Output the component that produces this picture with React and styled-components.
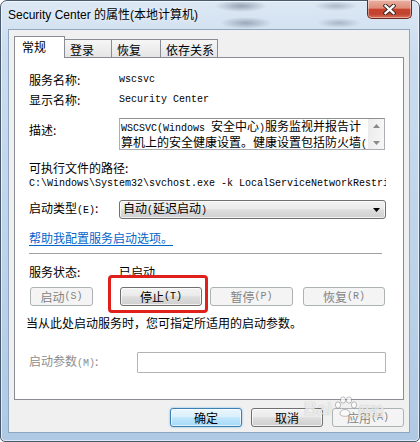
import styled, { createGlobalStyle } from "styled-components";

const GlobalStyle = createGlobalStyle`
  html, body {
    margin: 0;
    padding: 0;
    background: #fff;
  }
  body {
    width: 420px;
    height: 442px;
    overflow: hidden;
    font-family: "Noto Sans CJK SC", "Noto Sans", sans-serif;
    font-size: 12px;
  }
  * {
    box-sizing: border-box;
  }
`;

const Frame = styled.div`
  position: relative;
  width: 420px;
  height: 442px;
  display: flex;
  flex-direction: column;
  padding: 0 9px 8px 7px;
  border: 1px solid #4a5a6e;
  border-radius: 7px 7px 5px 5px;
  background:
    radial-gradient(ellipse 26px 6px at 240px 5px, rgba(70, 80, 100, 0.45), transparent),
    radial-gradient(ellipse 26px 6px at 245px 22px, rgba(70, 80, 100, 0.4), transparent),
    radial-gradient(ellipse 22px 5px at 335px 5px, rgba(70, 80, 100, 0.3), transparent),
    radial-gradient(ellipse 22px 5px at 338px 22px, rgba(70, 80, 100, 0.3), transparent),
    linear-gradient(180deg, #dce8f4 0%, #cbdcef 12%, #bcd3ea 60%, #afc9e5 100%);
  box-shadow: inset 0 0 0 1px rgba(255, 255, 255, 0.6);
`;

const TitleBar = styled.div`
  height: 28px;
  display: flex;
  align-items: flex-start;
  justify-content: space-between;
`;

const Title = styled.div`
  padding-top: 6px;
  font-family: "Liberation Sans", "Noto Sans CJK SC", sans-serif;
  font-size: 12px;
  line-height: 16px;
  color: #000;
  text-shadow: 0 0 6px rgba(255, 255, 255, 0.9);
`;

const CloseButton = styled.div`
  width: 45px;
  height: 19px;
  margin: -1px -2px 0 0;
  display: flex;
  align-items: center;
  justify-content: center;
  border: 1px solid #6d2720;
  border-top: none;
  border-radius: 0 0 5px 5px;
  background: linear-gradient(
    180deg,
    #eab0a2 0%,
    #df8d79 45%,
    #c8442e 52%,
    #c04331 78%,
    #d9735a 100%
  );
  box-shadow: inset 0 0 0 1px rgba(255, 255, 255, 0.4);
`;

const Client = styled.div`
  flex: 1;
  display: flex;
  flex-direction: column;
  background: #f0f0f0;
  border: 1px solid #8fa6c1;
  padding: 6px 5px 5px 5px;
`;

const TabStrip = styled.div`
  height: 21px;
  display: flex;
  align-items: flex-end;
`;

const Tab = styled.div`
  position: relative;
  z-index: ${(p) => (p.$active ? 1 : 0)};
  width: ${(p) => p.$w}px;
  height: ${(p) => (p.$active ? 22 : 18)}px;
  margin: 0 -1px ${(p) => (p.$active ? -1 : 0)}px 0;
  padding: 2px 0 0 ${(p) => (p.$active ? 7 : 5)}px;
  border: 1px solid #898c95;
  border-bottom: none;
  background: ${(p) =>
    p.$active ? "#fff" : "linear-gradient(180deg, #f6f6f6, #e5e5e5)"};
  line-height: 16px;
  color: #000;
`;

const Panel = styled.div`
  flex: 1;
  display: flex;
  flex-direction: column;
  background: #fff;
  border: 1px solid #898c95;
  padding: 12px 17px 0 14px;
`;

const Field = styled.div`
  display: flex;
  align-items: ${(p) => (p.$top ? "flex-start" : "center")};
  height: ${(p) => p.$h || 16}px;
  margin-top: ${(p) => p.$mt || 0}px;
`;

const Label = styled.div`
  flex: none;
  width: ${(p) => p.$w || 90}px;
  padding-top: ${(p) => p.$pt || 0}px;
  line-height: 16px;
  color: ${(p) => (p.$disabled ? "#8d8d8d" : "#000")};
  white-space: nowrap;
`;

const Mono = styled.div`
  font-family: "Liberation Mono", "DejaVu Sans Mono", monospace;
  font-size: 10px;
  line-height: 16px;
  color: #000;
  white-space: nowrap;
  overflow: hidden;
  width: ${(p) => (p.$w ? `${p.$w}px` : "auto")};
`;

const Half = styled.span`
  font-family: "Liberation Mono", "DejaVu Sans Mono", monospace;
  font-size: 10px;
`;

const Text = styled.div`
  line-height: 16px;
  color: #000;
  white-space: nowrap;
  margin-top: ${(p) => p.$mt || 0}px;
  margin-left: ${(p) => p.$ml || 0}px;
`;

const DescBox = styled.div`
  width: 266px;
  height: 32px;
  display: flex;
  border: 1px solid #abadb3;
  border-top-color: #8e8f8f;
  background: #fff;
`;

const DescText = styled.div`
  flex: 1;
  overflow: hidden;
  padding: 0 0 0 1px;
  line-height: 13px;
  white-space: nowrap;
  color: #000;
`;

const ScrollBar = styled.div`
  width: 16px;
  display: flex;
  flex-direction: column;
  align-items: center;
  justify-content: space-between;
  padding: 5px 0 4px;
  background: linear-gradient(90deg, #ececec, #f6f6f6);
`;

const Select = styled.div`
  width: 267px;
  height: 19px;
  display: flex;
  align-items: center;
  justify-content: space-between;
  padding: 0 5px 0 3px;
  border: 1px solid #707070;
  border-radius: 3px;
  background: linear-gradient(180deg, #f2f2f2 0%, #ebebeb 45%, #dddddd 52%, #cfcfcf 100%);
  box-shadow: inset 0 0 0 1px rgba(255, 255, 255, 0.7);
  line-height: 16px;
  color: #000;
`;

const HelpLink = styled.a`
  display: block;
  margin-top: 11px;
  line-height: 16px;
  color: #0066cc;
  text-decoration: underline;
  text-underline-offset: 2px;
  width: max-content;
`;

const Separator = styled.div`
  width: 353px;
  height: 1px;
  margin-top: 7px;
  background: #a0a0a0;
`;

const ButtonRow = styled.div`
  display: flex;
  height: 19px;
  margin-top: ${(p) => p.$mt || 0}px;
  justify-content: ${(p) => (p.$end ? "flex-end" : "flex-start")};
  gap: ${(p) => p.$gap || 0}px;
`;

const buttonBg = {
  normal:
    "linear-gradient(180deg, #f2f2f2 0%, #ebebeb 45%, #dddddd 52%, #cfcfcf 100%)",
  disabled: "#f4f4f4",
  default:
    "linear-gradient(180deg, #eaf6fd 0%, #d9f0fc 45%, #bee6fd 52%, #a7d9f5 100%)",
};

const buttonBorder = {
  normal: "#707070",
  disabled: "#adb2b5",
  default: "#3c7fb1",
};

const Button = styled.div`
  position: relative;
  flex: none;
  width: ${(p) => p.$w}px;
  height: 19px;
  margin-left: ${(p) => p.$ml || 0}px;
  display: flex;
  align-items: center;
  justify-content: center;
  border: 1px solid ${(p) => buttonBorder[p.$kind || "normal"]};
  border-radius: 3px;
  background: ${(p) => buttonBg[p.$kind || "normal"]};
  box-shadow: ${(p) =>
    p.$kind === "default"
      ? "inset 0 0 0 1px rgba(255,255,255,.6), 0 0 2px rgba(60,160,230,.8)"
      : p.$kind === "disabled"
      ? "none"
      : "inset 0 0 0 1px rgba(255,255,255,.7)"};
  color: ${(p) => (p.$kind === "disabled" ? "#838383" : "#000")};
  line-height: 16px;
  white-space: nowrap;
`;

const Highlight = styled.div`
  position: relative;
  margin-left: ${(p) => p.$ml || 0}px;
  display: flex;

  &::after {
    content: "";
    position: absolute;
    top: -12px;
    left: -12px;
    right: -6px;
    bottom: -7px;
    border: 3px solid #e0201b;
    border-radius: 4px;
    pointer-events: none;
  }
`;

const ParamInput = styled.div`
  width: 249px;
  height: 21px;
  border: 1px solid #b4b4b4;
  border-radius: 1px;
  background: #fff;
`;

const Watermark = styled.div`
  position: absolute;
  left: 303px;
  top: 395px;
  display: flex;
  align-items: flex-end;
  gap: 1px;
  pointer-events: none;
  font-family: "Liberation Sans", "Noto Sans CJK SC", sans-serif;
  color: rgba(255, 255, 255, 0.75);
  text-shadow: 0 0 1px rgba(0, 0, 0, 0.3);
`;

const WatermarkWord = styled.span`
  font-size: ${(p) => p.$size}px;
  font-weight: 700;
  line-height: 1;
`;

const Arrow = ({ dir }) => (
  <svg width="7" height="4" viewBox="0 0 7 4">
    <path
      d={dir === "up" ? "M0 4 L3.5 0 L7 4 Z" : "M0 0 L3.5 4 L7 0 Z"}
      fill={dir === "down-dark" ? "#000" : "#8a8a8a"}
    />
  </svg>
);

const CloseGlyph = () => (
  <svg width="13" height="11" viewBox="0 0 13 11">
    <path
      d="M2.5 1.8 L10.5 9.2 M10.5 1.8 L2.5 9.2"
      stroke="#3b2623"
      strokeWidth="4.2"
      strokeLinecap="square"
    />
    <path
      d="M2.5 1.8 L10.5 9.2 M10.5 1.8 L2.5 9.2"
      stroke="#fff"
      strokeWidth="2.3"
      strokeLinecap="square"
    />
  </svg>
);

const Paw = () => (
  <svg width="24" height="22" viewBox="0 0 24 22">
    <g fill="rgba(255,255,255,.7)" stroke="rgba(0,0,0,.25)" strokeWidth="1">
      <ellipse cx="5" cy="9" rx="2.6" ry="3.2" />
      <ellipse cx="10" cy="4" rx="2.6" ry="3.2" />
      <ellipse cx="16" cy="4" rx="2.6" ry="3.2" />
      <ellipse cx="21" cy="9" rx="2.6" ry="3.2" />
      <path d="M7 18 C7 12 17 12 17 18 C17 21 7 21 7 18 Z" />
    </g>
  </svg>
);

const tabs = [
  { name: "常规", w: 51, active: true },
  { name: "登录", w: 48 },
  { name: "恢复", w: 50 },
  { name: "依存关系", w: 58 },
];

export default function App() {
  return (
    <>
      <GlobalStyle />
      <Frame>
        <TitleBar>
          <Title>Security Center 的属性(本地计算机)</Title>
          <CloseButton>
            <CloseGlyph />
          </CloseButton>
        </TitleBar>
        <Client>
          <TabStrip>
            {tabs.map((t) => (
              <Tab key={t.name} $w={t.w} $active={t.active}>
                {t.name}
              </Tab>
            ))}
          </TabStrip>
          <Panel>
            <Field $h={20}>
              <Label>服务名称:</Label>
              <Mono>wscsvc</Mono>
            </Field>
            <Field $h={20}>
              <Label>显示名称:</Label>
              <Mono>Security Center</Mono>
            </Field>
            <Field $h={32} $mt={8} $top>
              <Label $pt={4}>描述:</Label>
              <DescBox>
                <DescText>
                  <div>
                    <Half>WSCSVC(Windows </Half>安全中心<Half>)</Half>
                    服务监视并报告计
                  </div>
                  <div>
                    算机上的安全健康设置。健康设置包括防火墙<Half>(</Half>
                  </div>
                </DescText>
                <ScrollBar>
                  <Arrow dir="up" />
                  <Arrow dir="down" />
                </ScrollBar>
              </DescBox>
            </Field>
            <Text $mt={10}>可执行文件的路径:</Text>
            <Mono $w={357}>
              C:\Windows\System32\svchost.exe -k LocalServiceNetworkRestricted
            </Mono>
            <Field $h={19} $mt={8}>
              <Label>
                启动类型<Half>(E)</Half>:
              </Label>
              <Select>
                <span>
                  自动<Half>(</Half>延迟启动<Half>)</Half>
                </span>
                <Arrow dir="down-dark" />
              </Select>
            </Field>
            <HelpLink href="#">帮助我配置服务启动选项。</HelpLink>
            <Separator />
            <Field $mt={10}>
              <Label>服务状态:</Label>
              <Text>已启动</Text>
            </Field>
            <ButtonRow $mt={7}>
              <Button $w={63} $ml={1} $kind="disabled">
                启动<Half>(S)</Half>
              </Button>
              <Highlight $ml={27}>
                <Button $w={82}>
                  停止<Half>(T)</Half>
                </Button>
              </Highlight>
              <Button $w={83} $ml={8} $kind="disabled">
                暂停<Half>(P)</Half>
              </Button>
              <Button $w={82} $ml={10} $kind="disabled">
                恢复<Half>(R)</Half>
              </Button>
            </ButtonRow>
            <Text $mt={9} $ml={-3}>
              当从此处启动服务时，您可指定所适用的启动参数。
            </Text>
            <Field $h={21} $mt={21}>
              <Label $w={108} $disabled>
                启动参数<Half>(M)</Half>:
              </Label>
              <ParamInput />
            </Field>
          </Panel>
          <ButtonRow $mt={8} $end $gap={9}>
            <Button $w={72} $kind="default">
              确定
            </Button>
            <Button $w={72}>取消</Button>
            <Button $w={72} $kind="disabled">
              应用<Half>(A)</Half>
            </Button>
          </ButtonRow>
        </Client>
        <Watermark>
          <WatermarkWord $size={18}>Bai</WatermarkWord>
          <Paw />
          <WatermarkWord $size={13}>经验</WatermarkWord>
        </Watermark>
      </Frame>
    </>
  );
}
